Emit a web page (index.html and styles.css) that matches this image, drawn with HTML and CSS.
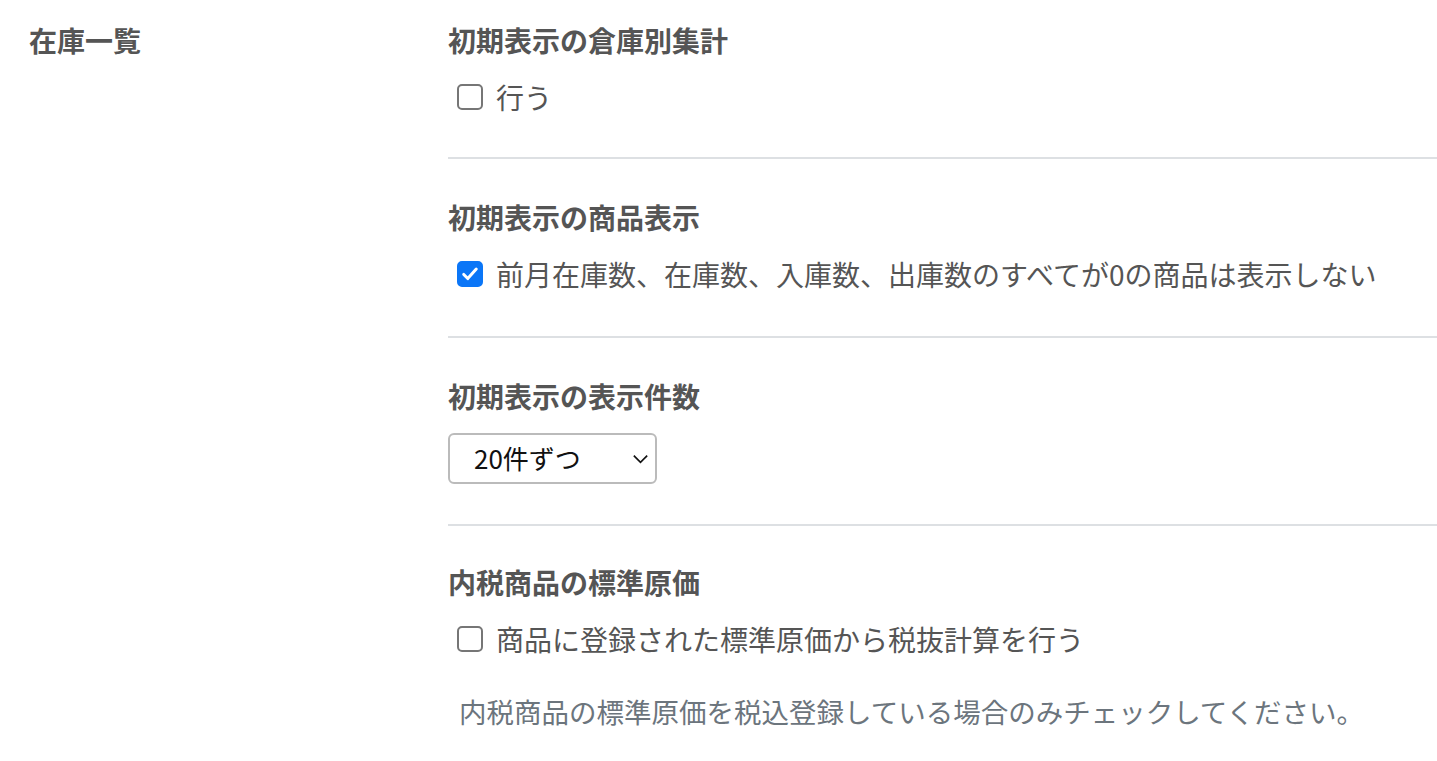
FILE: index.html
```html
<!DOCTYPE html>
<html lang="ja">
<head>
    <meta charset="UTF-8">
    <meta name="viewport" content="width=device-width, initial-scale=1.0">
    <title>在庫一覧 設定</title>
    <link rel="stylesheet" href="styles.css">
</head>
<body>
    <div class="setting">
        <div class="setting-title">在庫一覧</div>
        <div class="setting-body">
            <!-- 倉庫別集計 -->
            <section class="item">
                <h3 class="item-head">初期表示の倉庫別集計</h3>
                <label class="check">
                    <span class="box"></span>
                    <span>行う</span>
                </label>
            </section>

            <!-- 商品表示 -->
            <section class="item wide">
                <h3 class="item-head">初期表示の商品表示</h3>
                <label class="check">
                    <span class="box checked">
                        <svg viewBox="0 0 24 24" width="20" height="20"><path d="M4.5 12.5l4.8 5L19.5 6" fill="none" stroke="#fff" stroke-width="3.6" stroke-linecap="round" stroke-linejoin="round"/></svg>
                    </span>
                    <span>前月在庫数、在庫数、入庫数、出庫数のすべてが0の商品は表示しない</span>
                </label>
            </section>

            <!-- 表示件数 -->
            <section class="item">
                <h3 class="item-head">初期表示の表示件数</h3>
                <div class="select-wrap">
                    <select class="select">
                        <option>20件ずつ</option>
                        <option>50件ずつ</option>
                        <option>100件ずつ</option>
                    </select>
                    <svg class="chevron" viewBox="0 0 20 12" width="17" height="10"><path d="M2 2l8 8 8-8" fill="none" stroke="#111" stroke-width="2"/></svg>
                </div>
            </section>

            <!-- 標準原価 -->
            <section class="item last">
                <h3 class="item-head">内税商品の標準原価</h3>
                <label class="check">
                    <span class="box"></span>
                    <span>商品に登録された標準原価から税抜計算を行う</span>
                </label>
                <p class="help">内税商品の標準原価を税込登録している場合のみチェックしてください。</p>
            </section>
        </div>
    </div>
</body>
</html>
```

FILE: styles.css
```css
body {
    font-family: "Noto Sans CJK JP", "Noto Sans", sans-serif;
    background-color: #fff;
    color: #555;
    margin: 0;
}
.setting {
    display: grid;
    grid-template-columns: 419px 1fr;
    padding-left: 29px;
}
.setting-title {
    font-size: 28px;
    font-weight: bold;
    line-height: 40px;
    padding-top: 20px;
}
.item {
    padding: 38px 0 40px;
    border-bottom: 2px solid #dde0e3;
}
.item:first-child {
    padding-top: 20px;
}
.item.wide {
    padding-bottom: 42px;
}
.item.last {
    padding-top: 36px;
    border-bottom: none;
}
.item-head {
    margin: 0 0 17px;
    font-size: 28px;
    font-weight: bold;
    line-height: 40px;
}
.check {
    display: flex;
    align-items: center;
    gap: 13px;
    padding-left: 9px;
    font-size: 28px;
    line-height: 40px;
}
.box {
    width: 22px;
    height: 22px;
    border: 2px solid #767676;
    border-radius: 5px;
    display: flex;
    align-items: center;
    justify-content: center;
}
.box.checked {
    background-color: #0b76f7;
    border-color: #0b76f7;
}
.select-wrap {
    position: relative;
    width: 209px;
}
.select {
    appearance: none;
    width: 209px;
    height: 51px;
    border: 2px solid #bbb;
    border-radius: 6px;
    background: #fff;
    color: #111;
    font-family: "Noto Sans CJK JP", sans-serif;
    font-size: 26px;
    padding: 0 0 2px 24px;
}
.chevron {
    position: absolute;
    right: 8px;
    top: 21px;
}
.help {
    margin: 32px 0 0 11px;
    font-size: 27.5px;
    line-height: 40px;
    color: #6c757d;
}
```
